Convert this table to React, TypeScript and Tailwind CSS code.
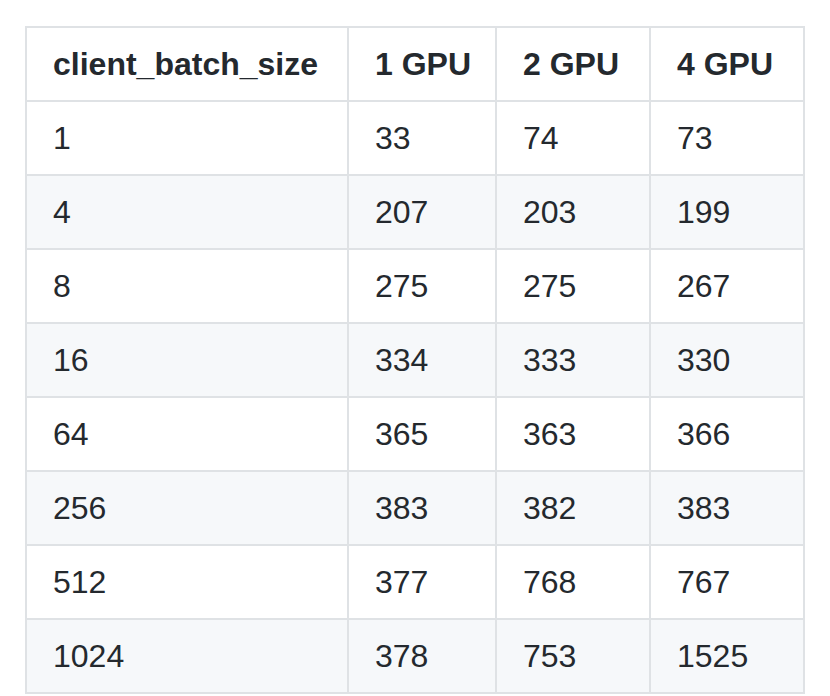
import React from 'react';

const headers = ['client_batch_size', '1 GPU', '2 GPU', '4 GPU'];

const rows = [
  ['1', '33', '74', '73'],
  ['4', '207', '203', '199'],
  ['8', '275', '275', '267'],
  ['16', '334', '333', '330'],
  ['64', '365', '363', '366'],
  ['256', '383', '382', '383'],
  ['512', '377', '768', '767'],
  ['1024', '378', '753', '1525'],
];

const widths = ['w-[322px]', 'w-[148px]', 'w-[154px]', 'w-[154px]'];

export default function App() {
  return (
    <div className="min-h-screen bg-white pl-[25px] pt-[26px] font-['Liberation_Sans',Arial,sans-serif] text-[#24292e]">
      <table className="table-fixed border-collapse w-[778px] text-[32px] leading-[48px]">
        <colgroup>
          {widths.map((w, i) => (
            <col key={i} className={w} />
          ))}
        </colgroup>
        <thead>
          <tr className="bg-white">
            {headers.map((h) => (
              <th
                key={h}
                className="border-2 border-[#dfe2e5] px-[26px] py-[12px] text-left font-bold whitespace-nowrap"
              >
                {h}
              </th>
            ))}
          </tr>
        </thead>
        <tbody>
          {rows.map((r, idx) => (
            <tr key={idx} className={idx % 2 === 1 ? 'bg-[#f6f8fa]' : 'bg-white'}>
              {r.map((c, j) => (
                <td key={j} className="border-2 border-[#dfe2e5] px-[26px] py-[12px] whitespace-nowrap">
                  {c}
                </td>
              ))}
            </tr>
          ))}
        </tbody>
      </table>
    </div>
  );
}
